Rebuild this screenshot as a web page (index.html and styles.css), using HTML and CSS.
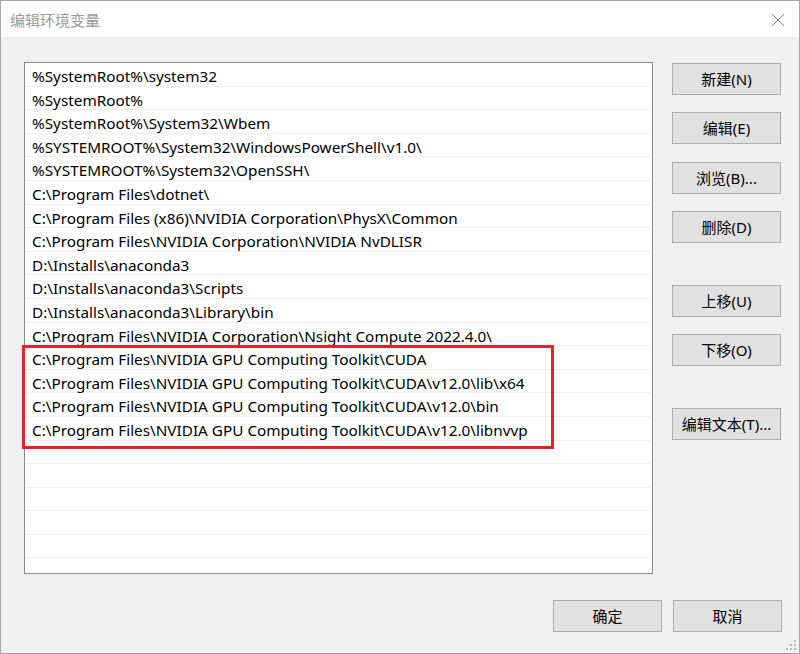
FILE: index.html
```html
<!DOCTYPE html>
<html lang="zh-CN">
<head>
<meta charset="utf-8">
<title>编辑环境变量</title>
<link rel="stylesheet" href="styles.css">
</head>
<body>
<div class="window">
  <div class="titlebar">
    <span class="title">编辑环境变量</span>
    <svg class="close" width="14" height="14" viewBox="0 0 14 14"><path d="M1 1 L13 13 M13 1 L1 13" stroke="#808080" stroke-width="1" fill="none"/></svg>
  </div>
  <div class="content">
    <div class="main">
      <div class="list">
        <div class="row">%SystemRoot%\system32</div>
        <div class="row">%SystemRoot%</div>
        <div class="row">%SystemRoot%\System32\Wbem</div>
        <div class="row">%SYSTEMROOT%\System32\WindowsPowerShell\v1.0\</div>
        <div class="row">%SYSTEMROOT%\System32\OpenSSH\</div>
        <div class="row">C:\Program Files\dotnet\</div>
        <div class="row">C:\Program Files (x86)\NVIDIA Corporation\PhysX\Common</div>
        <div class="row">C:\Program Files\NVIDIA Corporation\NVIDIA NvDLISR</div>
        <div class="row">D:\Installs\anaconda3</div>
        <div class="row">D:\Installs\anaconda3\Scripts</div>
        <div class="row">D:\Installs\anaconda3\Library\bin</div>
        <div class="row">C:\Program Files\NVIDIA Corporation\Nsight Compute 2022.4.0\</div>
        <div class="row">C:\Program Files\NVIDIA GPU Computing Toolkit\CUDA</div>
        <div class="row">C:\Program Files\NVIDIA GPU Computing Toolkit\CUDA\v12.0\lib\x64</div>
        <div class="row">C:\Program Files\NVIDIA GPU Computing Toolkit\CUDA\v12.0\bin</div>
        <div class="row">C:\Program Files\NVIDIA GPU Computing Toolkit\CUDA\v12.0\libnvvp</div>
        <div class="row"></div>
        <div class="row"></div>
        <div class="row"></div>
        <div class="row"></div>
        <div class="row"></div>
      </div>
      <div class="side">
        <button class="btn">新建(N)</button>
        <button class="btn">编辑(E)</button>
        <button class="btn">浏览(B)...</button>
        <button class="btn">删除(D)</button>
        <button class="btn sep">上移(U)</button>
        <button class="btn">下移(O)</button>
        <button class="btn sep">编辑文本(T)...</button>
      </div>
    </div>
    <div class="footer">
      <button class="btn default">确定</button>
      <button class="btn">取消</button>
    </div>
  </div>
  <div class="highlight"></div>
  <svg class="grip" width="12" height="12" viewBox="0 0 12 12">
    <rect x="8" y="0" width="2" height="2" fill="#b8b8b8"/>
    <rect x="4" y="4" width="2" height="2" fill="#b8b8b8"/>
    <rect x="8" y="4" width="2" height="2" fill="#b8b8b8"/>
    <rect x="0" y="8" width="2" height="2" fill="#b8b8b8"/>
    <rect x="4" y="8" width="2" height="2" fill="#b8b8b8"/>
    <rect x="8" y="8" width="2" height="2" fill="#b8b8b8"/>
  </svg>
</div>
</body>
</html>
```
FILE: styles.css
```css
* { box-sizing: border-box; }
html, body { margin: 0; padding: 0; background: #f0f0f0; }
body { font-family: "Noto Sans", "Noto Sans CJK SC", sans-serif; }

.window {
  position: relative;
  width: 800px;
  height: 654px;
  border: 1px solid #a6a6a6;
  background: #f0f0f0;
  display: flex;
  flex-direction: column;
  overflow: hidden;
}

.titlebar {
  height: 36px;
  background: #ffffff;
  display: flex;
  align-items: center;
  justify-content: space-between;
  padding: 0 14px 0 9px;
  flex: none;
}
.title {
  font-family: "Noto Sans CJK SC", sans-serif;
  font-size: 15px;
  color: #999999;
}
.close { display: block; margin-top: 1px; }

.content {
  flex: 1;
  display: flex;
  flex-direction: column;
  padding: 25px 17px 20px 23px;
}

.main {
  display: flex;
  gap: 19px;
}

.list {
  width: 629px;
  height: 512px;
  border: 1px solid #828790;
  background: #ffffff;
  overflow: hidden;
}
.row {
  height: 23.6px;
  line-height: 20.6px;
  padding-top: 3px;
  margin: 0 1px;
  border-bottom: 1px solid #f0f0f0;
  padding-left: 6px;
  font-size: 15.3px;
  color: #000000;
  white-space: nowrap;
}

.side {
  display: flex;
  flex-direction: column;
  gap: 17.4px;
  padding-top: 1px;
}
.btn {
  width: 109px;
  height: 32px;
  background: #e1e1e1;
  border: 1px solid #adadad;
  border-radius: 0;
  padding: 0 0 1px;
  font-family: "Noto Sans", "Noto Sans CJK SC", sans-serif;
  font-size: 15px;
  color: #000000;
}
.side .sep { margin-top: 24.4px; }
.btn.default { border-color: #a2adb9; }

.footer {
  display: flex;
  justify-content: flex-end;
  gap: 11px;
  margin-top: 26px;
}

.highlight {
  position: absolute;
  left: 21px;
  top: 344px;
  width: 532px;
  height: 104px;
  border: 3px solid #e8202a;
}

.grip {
  position: absolute;
  right: 1px;
  bottom: 1px;
}
```
